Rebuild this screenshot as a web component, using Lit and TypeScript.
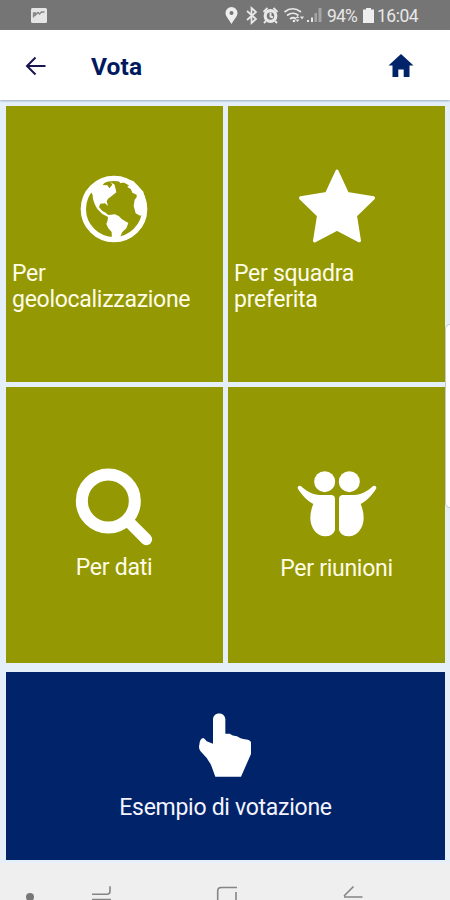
import { LitElement, html, css, svg } from "lit";
import { customElement } from "lit/decorators.js";

const globe = html`<svg width="70" height="70" viewBox="238 72 210 210">
  <circle cx="343" cy="177" r="92" fill="none" stroke="#fff" stroke-width="16"/>
  <path fill="#fff" d="M272 122 L290 101 L306 90 L325 91 L314 99 L309 105 L323 106 L329 115 L338 104 L333 97 L345 104 L350 127 L337 137 L325 146 L321 154 L325 168 L316 160 L302 161 L298 171 L307 182 L318 188 L326 195 L346 193 L358 199 L367 208 L386 219 L380 235 L368 246 L360 264 L358 275 L337 275 L336 246 L326 235 L320 222 L324 211 L325 201 L308 192 L293 177 L286 164 L280 148 L279 135Z"/>
  <path fill="#fff" d="M350 82 L362 100 L374 96 L388 106 L383 111 L394 118 L398 128 L411 134 L411 142 L405 149 L402 168 L408 190 L421 197 L436 191 L442 170 L431 125 L401 93Z"/>
</svg>`;

const star = html`<svg width="78" height="76" viewBox="219 54 234 228">
  <path fill="#fff" stroke="#fff" stroke-width="10" stroke-linejoin="round" d="M336 64 L367 131 L445 144 L391 197 L403 272 L336 237 L269 272 L281 197 L227 144 L305 131Z"/>
</svg>`;

const search = html`<svg width="78" height="78" viewBox="76 54 234 234">
  <circle cx="176" cy="153" r="79.500" fill="none" stroke="#fff" stroke-width="36"/>
  <path d="M238 216 L290 268" stroke="#fff" stroke-width="35" stroke-linecap="round"/>
</svg>`;

const people = html`<svg width="82" height="68" viewBox="78 60 246 204">
  <g fill="#fff">
    <circle cx="164" cy="95" r="31.500"/><circle cx="238" cy="95" r="31.500"/>
    <path d="M83 115 C82 107 91 105 96 111 C110 124 128 134 150 135 H185 Q195 137 195 147 V240 Q188 260 163 259 C139 257 121 233 121 204 Q121 183 130 162 C113 153 94 135 83 115Z"/>
    <path d="M319 115 C320 107 311 105 306 111 C292 124 274 134 252 135 H217 Q207 137 207 147 V240 Q214 260 239 259 C263 257 281 233 281 204 Q281 183 272 162 C289 153 308 135 319 115Z"/>
  </g>
</svg>`;

const hand = html`<svg width="54" height="66" viewBox="295 65 162 198">
  <path fill="#fff" d="M340 160 V86 C342 64 375 64 377 86 V130 L390 130 Q398 137 412 138 Q422 145 434 147 Q450 148 454 155 V191 L424 259 H347 L335 226 Q325 204 302 182 Q296 174 299 163 Q301 143 311 143 Q316 146 321 153Z"/>
</svg>`;

const statusIcon = (w: number, box: string, body: unknown) =>
  html`<svg width=${w} height="20" viewBox=${box}>${body}</svg>`;

@customElement("app-root")
export class AppRoot extends LitElement {
  static styles = css`
    :host { display: flex; flex-direction: column; width: 450px; height: 900px; overflow: hidden; position: relative; background: #e4effa; font-family: Roboto, sans-serif; }
    svg { display: block; flex: none; }
    .status { height: 30px; flex: none; background: #757575; color: #e8e8e8; display: flex; align-items: center; padding: 0 31px 0 30px; box-sizing: border-box; font-size: 17.500px; }
    .spacer { flex: 1; }
    .battery-text { width: 34px; white-space: nowrap; letter-spacing: -.8px; padding-top: 2px; }
    .clock { width: 42px; white-space: nowrap; letter-spacing: -.5px; padding-top: 2px; }
    header { height: 70px; flex: none; box-sizing: border-box; background: #fff; box-shadow: 0 1px 2px #9cacc4; display: flex; align-items: center; padding: 1px 36px 0 25px; color: #00195f; }
    h1 { margin: 3px 0 0 44px; font-size: 24.500px; line-height: 30px; font-weight: 700; flex: 1; letter-spacing: .1px; }
    .grid { display: grid; grid-template-columns: 217px 217px; grid-template-rows: 276px 276px; gap: 5px; padding: 6px 5px 0 6px; justify-content: space-between; }
    .tile { background: #949803; color: #fff; display: flex; flex-direction: column; align-items: center; box-sizing: border-box; font-size: 23px; letter-spacing: -.28px; line-height: 26px; }
    .tile span { white-space: nowrap; color: #fffde8; }
    .tile .wide { align-self: stretch; padding-left: 6px; }
    .globe { padding: 68px 1px 0 0; } .globe span { margin-top: 17px; }
    .star { padding-top: 62px; } .star span { margin-top: 17px; }
    .search { padding: 81px 1px 0 0; } .search span { margin-top: 9px; }
    .people { padding-top: 83px; } .people span { margin-top: 18px; }
    .example { margin: 9px 5px 0 6px; height: 188px; flex: none; background: #002369; padding-top: 40px; }
    .example svg { margin-right: 1px; }
    .example span { margin-top: 17px; color: #f4f4ff; }
    footer { flex: 1; margin-top: 3px; background: #efefef; }
    .handle { position: absolute; right: -8px; top: 324px; width: 13px; height: 184px; box-sizing: border-box; border: 1px solid #c3c8cb; border-radius: 5px; background: #fff; }
  `;

  render() {
    return html`
      <div class="status">
        ${statusIcon(17, "30 5 17 20", svg`<rect x="31" y="8" width="16" height="15" rx="1.5" fill="#e5e5e5"/><path d="M33.500 17.500v-4.500h2l-1 3 3.500-3.500 1.500 1.500 2-2h3" fill="none" stroke="#858585" stroke-width="1.300"/>`)}
        <div class="spacer"></div>
        ${statusIcon(102, "225 5 102 20", svg`
          <path d="M231.500 24C228 18 225.500 16 225.500 13a6 6 0 0 1 12 0c0 3-2.500 5-6 11z" fill="#eee"/><circle cx="231.500" cy="13" r="2" fill="#757575"/>
          <path d="M247 11l9 8-4.500 4V8l4.500 4-9 8" fill="none" stroke="#e8e8e8" stroke-width="1.700"/>
          <circle cx="270.500" cy="16" r="5.300" fill="#757575" stroke="#e8e8e8" stroke-width="3.200"/><path d="M263.500 12l4-4M277.500 12l-4-4M266 21l-2 2M275 21l2 2M270.500 12.500v4l2.500 1" fill="none" stroke="#e8e8e8" stroke-width="1.900"/>
          <path d="M284.500 12q8-6.500 16.500 0M287 15.500q6-4.500 11.500 0M290 19q3-2.500 6 0" fill="none" stroke="#e8e8e8" stroke-width="1.700"/><circle cx="294" cy="21" r="1.300" fill="#e8e8e8"/>
          <path d="M295.500 18l2-2 2 2zM295.500 19.500h4l-2 2.500zM300 16.500h4l-2 3z" fill="#e8e8e8"/>
          <path d="M307 20h2v2h-2zM311 17.500h2v4.500h-2z" fill="#e8e8e8"/><path d="M314.500 13h2.500v9h-2.500zM318.500 8h3v14h-3z" fill="#a4a4a4"/>`)}
        <div class="battery-text">94%</div>
        ${statusIcon(16, "360 5 16 20", svg`<path d="M362 9.500h3V8h5v1.500h3V23h-11z" fill="#eee"/>`)}
        <div class="clock">16:04</div>
      </div>
      <header>
        <svg width="22" height="22" viewBox="0 0 22 22"><path d="M10.500 2.500L2 11l8.500 8.500M2 11h18.500" fill="none" stroke="#17164f" stroke-width="2"/></svg>
        <h1>Vota</h1>
        <svg width="26" height="26" viewBox="0 0 26 26"><path fill="#002369" d="M13 1L25.500 12.500H21.500V24H15.700V16.500H10.300V24H4.500V12.500H.5Z"/></svg>
      </header>
      <div class="grid">
        <div class="tile globe">${globe}<span class="wide">Per<br>geolocalizzazione</span></div>
        <div class="tile star">${star}<span class="wide">Per squadra<br>preferita</span></div>
        <div class="tile search">${search}<span>Per dati</span></div>
        <div class="tile people">${people}<span>Per riunioni</span></div>
      </div>
      <div class="tile example">${hand}<span>Esempio di votazione</span></div>
      <footer><svg width="450" height="37" viewBox="0 863 450 37">
        <circle cx="30" cy="897" r="4" fill="#777"/>
        <path d="M92 894.300h15q3 0 3-3v-5M92 899.500h19M217.700 900v-9q0-3.500 3.500-3.500h15.800M236 892v8M353.500 886.500l-9.500 9.500M344 897h18.500" fill="none" stroke="#858585" stroke-width="1.600"/>
      </svg></footer>
      <div class="handle"></div>`;
  }
}
